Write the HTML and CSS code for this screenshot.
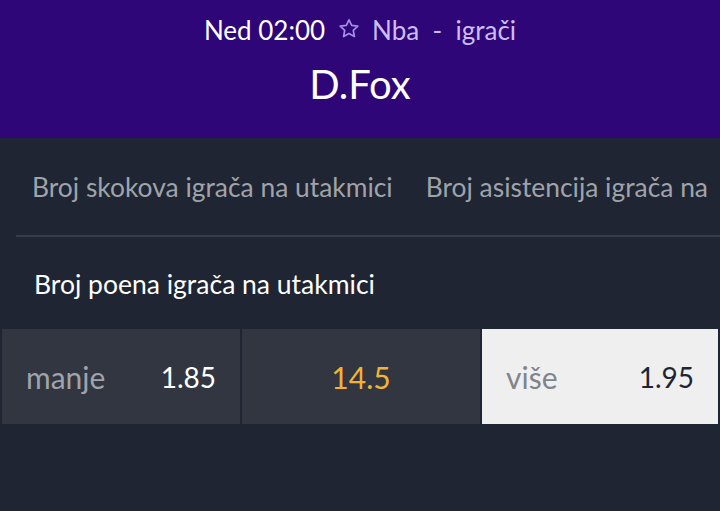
FILE: index.html
```html
<!DOCTYPE html>
<html lang="hr">
<head>
<meta charset="utf-8">
<link rel="stylesheet" href="styles.css">
</head>
<body>
<header class="header">
  <div class="meta">
    <span class="time">Ned 02:00</span>
    <svg class="star" viewBox="0 0 24 24" width="24" height="24"><path d="M12 2.8l2.7 5.6 6.1.8-4.5 4.2 1.1 6.1L12 16.6l-5.4 2.9 1.1-6.1-4.5-4.2 6.1-.8z" fill="none" stroke="#a78ce8" stroke-width="1.7" stroke-linejoin="round"/></svg>
    <span class="league">Nba&nbsp; - &nbsp;igrači</span>
  </div>
  <div class="player">D.Fox</div>
</header>
<main class="content">
  <nav class="tabs">
    <span class="tab">Broj skokova igrača na utakmici</span>
    <span class="tab">Broj asistencija igrača na</span>
  </nav>
  <div class="divider"></div>
  <h2 class="market">Broj poena igrača na utakmici</h2>
  <div class="odds">
    <div class="odd dark"><span class="label">manje</span><span class="value">1.85</span></div>
    <div class="odd dark center"><span class="line">14.5</span></div>
    <div class="odd light"><span class="label">više</span><span class="value">1.95</span></div>
  </div>
</main>
</body>
</html>
```
FILE: styles.css
```css
html, body {
  margin: 0;
  padding: 0;
  background: #1f2532;
  font-family: "Lato", "Open Sans", sans-serif;
  overflow: hidden;
}
.header {
  background: #2e0677;
  height: 138px;
  display: flex;
  flex-direction: column;
  align-items: center;
  box-sizing: border-box;
  padding-top: 13px;
}
.meta {
  display: flex;
  align-items: center;
  font-size: 26px;
  height: 34px;
}
.time { color: #ffffff; }
.star { margin: 0 11px 2px 12px; }
.league { color: #cdbdf5; }
.player {
  color: #ffffff;
  font-size: 40px;
  margin-top: 13px;
}
.content {
  display: flex;
  flex-direction: column;
}
.tabs {
  display: flex;
  gap: 33px;
  white-space: nowrap;
  padding: 0 0 0 32px;
  height: 97px;
  align-items: center;
  overflow: hidden;
}
.tab {
  color: #9fa3aa;
  font-size: 26.4px;
}
.divider {
  height: 2px;
  background: #363c49;
  margin-left: 16px;
}
.market {
  margin: 0;
  font-weight: normal;
  color: #ffffff;
  font-size: 26.5px;
  padding: 31px 0 0 34px;
  height: 61px;
}
.odds {
  display: grid;
  grid-template-columns: 238px 238px 236px;
  gap: 2px;
  padding: 0 2px;
  height: 95px;
}
.odd {
  display: flex;
  align-items: center;
  justify-content: space-between;
  padding: 0 24px 0 24px;
}
.dark { background: #313640; }
.light { background: #efefef; }
.center { justify-content: center; }
.label { font-size: 30px; color: #9fa3aa; }
.light .label { color: #80848c; }
.value { font-size: 28px; color: #ffffff; }
.light .value { color: #1f2532; }
.line { font-size: 30px; color: #f2b233; }
```
